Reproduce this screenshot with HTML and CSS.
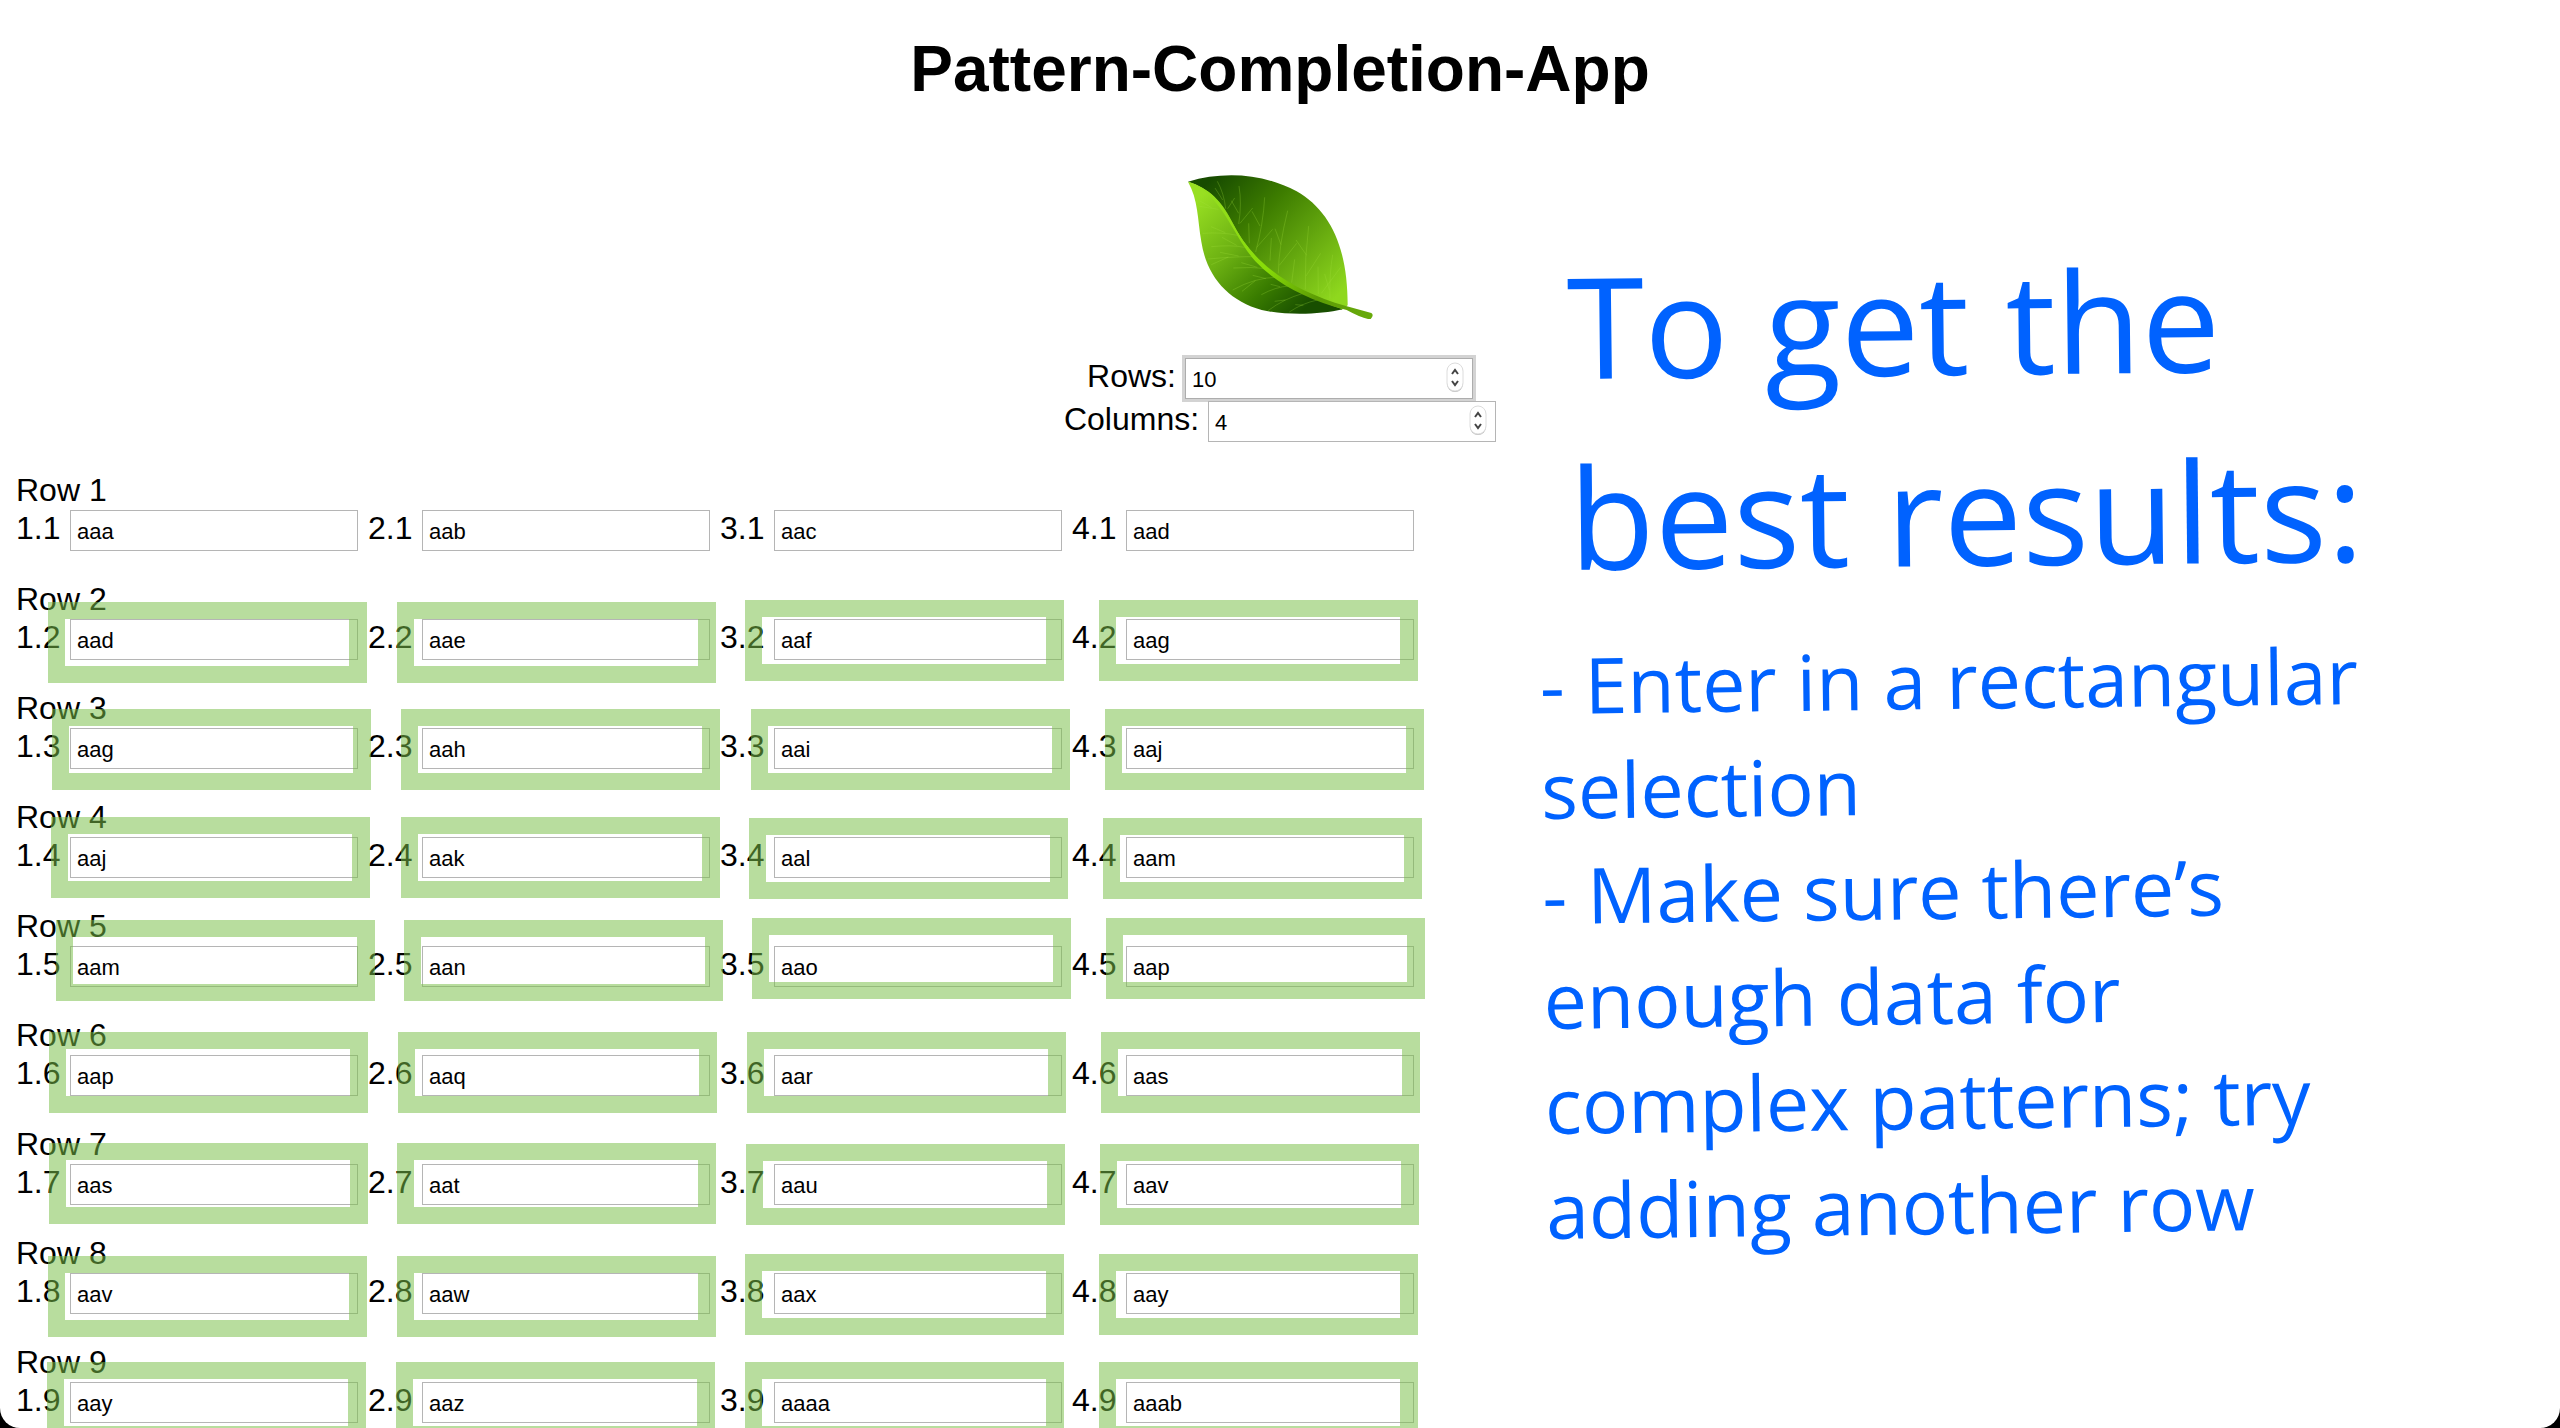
FILE: index.html
```html
<!DOCTYPE html>
<html lang="en">
<head>
<meta charset="utf-8">
<title>Pattern-Completion-App</title>
<link rel="stylesheet" href="styles.css">
</head>
<body>
<main class="page">
  <header class="header">
    <h1 class="title">Pattern-Completion-App</h1>
    <svg class="leaf" viewBox="0 0 720 570" role="img" aria-label="Leaf">
      <defs>
        <linearGradient id="upper" gradientUnits="userSpaceOnUse" x1="150" y1="90" x2="520" y2="450">
          <stop offset="0" stop-color="#174b00"/><stop offset=".35" stop-color="#3d7c00"/><stop offset=".65" stop-color="#63a60e"/><stop offset="1" stop-color="#8fd81e"/>
        </linearGradient>
        <linearGradient id="lower" gradientUnits="userSpaceOnUse" x1="110" y1="150" x2="430" y2="480">
          <stop offset="0" stop-color="#98df22"/><stop offset=".4" stop-color="#6bb012"/><stop offset=".72" stop-color="#3a7d00"/><stop offset="1" stop-color="#184e00"/>
        </linearGradient>
        <linearGradient id="rib" gradientUnits="userSpaceOnUse" x1="84" y1="95" x2="640" y2="500">
          <stop offset="0" stop-color="#97df22"/><stop offset=".5" stop-color="#88dc08"/><stop offset=".75" stop-color="#5c9c04"/><stop offset="1" stop-color="#69ab0c"/>
        </linearGradient>
      </defs>
      <path fill="url(#upper)" d="M84 95C190 63 310 70 410 124C510 182 563 290 563 466L545 479C410 440 290 350 225 235C190 162 145 115 84 95Z"/>
      <path fill="url(#lower)" d="M84 95C150 116 185 152 220 222C285 350 410 430 548 478C480 494 380 497 305 480C205 452 140 380 124 275C112 205 115 150 84 95Z"/>
      <g class="veins">
        <path d="M197 176Q192 130 172 94M188 150L165 114M203 176L224 144M236 222Q246 160 237 108M236 190L214 152M240 220L278 174M287 306Q310 220 314 142M300 228L276 184M290 292L338 238M355 370Q356 290 383 182M363 284L345 236M358 346L410 280M436 418Q434 320 446 228M440 316L408 270M438 378L482 310M395 398L404 328M475 432L474 350M510 446Q508 370 518 314M508 420L494 372M484 430L542 352M330 332L334 264M268 280L266 220"/>
        <path d="M175 178L118 169M155 173L120 153M232 256Q186 246 128 250M196 248L153 230M254 292Q212 284 154 290M230 286L186 262M283 320Q230 319 144 327M236 318L180 307M205 321L154 344M320 356Q276 350 220 354M292 352L244 338M350 382Q286 382 218 420M318 386L278 376M286 392L246 424M388 408Q348 410 304 434M360 410L332 403M430 430Q372 446 324 482M376 450L344 454M472 450Q426 460 388 486M430 466L406 464"/>
      </g>
      <path fill="url(#rib)" d="M84 95C146 113 185 155 216 216C282 347 400 422 558 468L634 489Q643 496 632 507L624 507Q600 502 560 480C430 446 345 396 286 334C216 254 188 134 84 95Z"/>
    </svg>
  </header>

  <form class="size">
    <div class="field"><label for="rows">Rows:</label><span class="number"><input class="box box-focused" id="rows" type="number" value="10"><svg class="stepper" viewBox="0 0 18 30" aria-hidden="true"><rect class="stepper-shade" x="1" y="2" width="16" height="28" rx="8"/><rect x="1" y="1" width="16" height="28" rx="8"/><path d="M6 12l3-4 3 4M6 19l3 4 3-4"/></svg></span></div>
    <div class="field"><label for="columns">Columns:</label><span class="number"><input class="box" id="columns" type="number" value="4"><svg class="stepper" viewBox="0 0 18 30" aria-hidden="true"><rect class="stepper-shade" x="1" y="2" width="16" height="28" rx="8"/><rect x="1" y="1" width="16" height="28" rx="8"/><path d="M6 12l3-4 3 4M6 19l3 4 3-4"/></svg></span></div>
  </form>

  <form class="rows" id="pattern-rows"></form>

  <svg class="marks" aria-hidden="true">
    <defs><path id="mark" fill-rule="evenodd" d="M0 0H319V81H0ZM17 17V64H301V17Z"/></defs>
    <use href="#mark" x="48" y="602"/><use href="#mark" x="397" y="602"/><use href="#mark" x="745" y="600"/><use href="#mark" x="1099" y="600"/>
    <use href="#mark" x="52" y="709"/><use href="#mark" x="401" y="709"/><use href="#mark" x="751" y="709"/><use href="#mark" x="1105" y="709"/>
    <use href="#mark" x="51" y="817"/><use href="#mark" x="401" y="817"/><use href="#mark" x="749" y="818"/><use href="#mark" x="1103" y="818"/>
    <use href="#mark" x="56" y="920"/><use href="#mark" x="404" y="920"/><use href="#mark" x="752" y="918"/><use href="#mark" x="1106" y="918"/>
    <use href="#mark" x="49" y="1032"/><use href="#mark" x="398" y="1032"/><use href="#mark" x="747" y="1032"/><use href="#mark" x="1101" y="1032"/>
    <use href="#mark" x="49" y="1143"/><use href="#mark" x="397" y="1143"/><use href="#mark" x="746" y="1144"/><use href="#mark" x="1100" y="1144"/>
    <use href="#mark" x="48" y="1256"/><use href="#mark" x="397" y="1256"/><use href="#mark" x="745" y="1254"/><use href="#mark" x="1099" y="1254"/>
    <use href="#mark" x="47" y="1362"/><use href="#mark" x="396" y="1362"/><use href="#mark" x="745" y="1362"/><use href="#mark" x="1099" y="1362"/>
  </svg>

  <aside class="note">
    <h2 class="note-title">To get the<br>best results:</h2>
    <p class="note-text">- Enter in a rectangular<br>selection<br>- Make sure there’s<br>enough data for<br>complex patterns; try<br>adding another row</p>
  </aside>
</main>
<script src="rows.js"></script>
</body>
</html>
```
FILE: styles.css
```css
* {
  box-sizing: border-box;
}

html {
  background: #000;
}

body {
  margin: 0;
  background: #000;
  color: #000;
  font: 32px/36px "Liberation Sans", Arial, sans-serif;
}

.page {
  position: relative;
  height: 100vh;
  padding: 32px 16px 0;
  overflow: hidden;
  border-radius: 0 0 20px 20px;
  background: #fff;
}

.header {
  display: flex;
  flex-direction: column;
  align-items: center;
}

.title {
  margin: 0 0 44px;
  font-size: 64px;
  line-height: 74px;
}

.leaf {
  display: block;
  width: 240px;
  height: 190px;
}

.veins {
  fill: none;
  stroke: #a5e03c;
  stroke-width: 2;
  stroke-opacity: .4;
}

.size {
  display: flex;
  flex-direction: column;
  align-items: center;
  gap: 2px;
  margin: 18px 0 30px;
}

.field,
.cell {
  display: flex;
  align-items: flex-start;
}

.field {
  gap: 9px;
}

.number {
  position: relative;
}

.box {
  display: block;
  width: 288px;
  height: 41px;
  margin: 0;
  padding: 2px 6px 0;
  border: 1px solid #b5b5b5;
  border-radius: 0;
  background: #fff;
  color: #000;
  font: 22px "Liberation Sans", Arial, sans-serif;
  appearance: none;
  outline: none;
}

.box[type="number"] {
  appearance: textfield;
}

.box-focused {
  border-color: #adadad;
  box-shadow: 0 0 0 3px #d3d3d3;
}

.stepper {
  position: absolute;
  top: 4px;
  right: 9px;
  width: 18px;
  height: 30px;
  fill: #fff;
}

.stepper rect {
  stroke: #dcdcdc;
}

.stepper .stepper-shade {
  fill: #bbb;
  stroke: none;
}

.stepper path {
  fill: none;
  stroke: #444;
  stroke-width: 2;
}

.rows {
  display: flex;
  flex-direction: column;
  gap: 30px;
}

.row-name {
  margin: 0 0 2px;
}

.cells {
  display: flex;
}

.cell {
  width: 352px;
}

.cell-label {
  width: 54px;
}

.marks {
  position: absolute;
  top: 0;
  left: 0;
  width: 100%;
  height: 100%;
  fill: rgba(121, 191, 72, .53);
  pointer-events: none;
}

.note {
  position: absolute;
  top: 230px;
  left: 1543px;
  color: #0062ff;
  font-family: "Open Sans", "Noto Sans", sans-serif;
  font-kerning: normal;
  text-rendering: geometricPrecision;
  white-space: nowrap;
}

.note-title {
  margin: 0 0 20px 25px;
  font-size: 140px;
  font-weight: 400;
  line-height: 191px;
  transform: rotate(-.6deg);
  transform-origin: 0 50%;
}

.note-text {
  margin: 0;
  font-size: 77px;
  line-height: 105px;
  transform: rotate(-.7deg);
  transform-origin: 0 50%;
}
```
FILE: rows.js
```js
const values = [
  ["aaa", "aab", "aac", "aad"],
  ["aad", "aae", "aaf", "aag"],
  ["aag", "aah", "aai", "aaj"],
  ["aaj", "aak", "aal", "aam"],
  ["aam", "aan", "aao", "aap"],
  ["aap", "aaq", "aar", "aas"],
  ["aas", "aat", "aau", "aav"],
  ["aav", "aaw", "aax", "aay"],
  ["aay", "aaz", "aaaa", "aaab"]
];

document.getElementById("pattern-rows").innerHTML = values.map((row, r) => `
  <section>
    <p class="row-name">Row ${r + 1}</p>
    <div class="cells">${row.map((value, c) => `
      <div class="cell">
        <label class="cell-label" for="cell-${c + 1}-${r + 1}">${c + 1}.${r + 1}</label>
        <input class="box" type="text" id="cell-${c + 1}-${r + 1}" value="${value}">
      </div>`).join("")}
    </div>
  </section>`).join("");
```
